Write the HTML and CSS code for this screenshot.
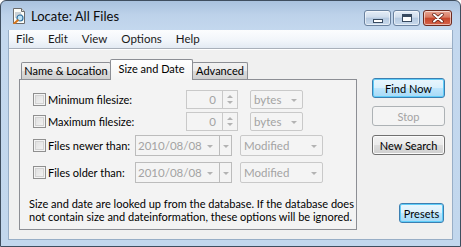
FILE: index.html
```html
<!DOCTYPE html>
<html lang="en">
<head>
    <meta charset="UTF-8">
    <title>Locate: All Files</title>
    <link rel="stylesheet" href="styles.css">
</head>
<body>

<div class="window">
    <div class="titlebar">
        <svg class="app-icon" width="16" height="16" viewBox="0 0 16 16">
            <path d="M2.5 0.5h8l3 3v12h-11z" fill="#fdfdf8" stroke="#6b6b6b"/>
            <path d="M10.5 0.5v3h3" fill="#e4e4dc" stroke="#6b6b6b"/>
            <path d="M4 5h6M4 7h7M4 9h3" stroke="#9aa6b4"/>
            <circle cx="9" cy="10" r="3" fill="#bfe3f6" stroke="#2f6f9f" stroke-width="1.2"/>
            <path d="M6.8 12.2l-3.6 3.4" stroke="#d5761e" stroke-width="2" stroke-linecap="round"/>
        </svg>
        <span class="title">Locate: All Files</span>
        <div class="caption-buttons">
            <span class="cap cap-min"><i></i></span>
            <span class="cap cap-max"><i></i></span>
            <span class="cap cap-close">
                <svg width="12" height="10" viewBox="0 0 12 10">
                    <path d="M2 1.5l8 7M10 1.5l-8 7" stroke="#5a1a10" stroke-width="3.4" stroke-linecap="round"/>
                    <path d="M2 1.5l8 7M10 1.5l-8 7" stroke="#fff" stroke-width="2" stroke-linecap="round"/>
                </svg>
            </span>
        </div>
    </div>

    <div class="client">
        <ul class="menubar">
            <li>File</li>
            <li>Edit</li>
            <li>View</li>
            <li>Options</li>
            <li>Help</li>
        </ul>

        <div class="content">
            <div class="tabs">
                <div class="tab-strip">
                    <span class="tab tab-name">Name &amp; Location</span>
                    <span class="tab tab-size active">Size and Date</span>
                    <span class="tab tab-adv">Advanced</span>
                </div>
                <div class="tab-panel">
                    <div class="row row-size">
                        <label class="check"><span class="box"></span>Minimum filesize:</label>
                        <span class="spin-field">0</span>
                        <span class="spin-btn"><i class="up"></i><i class="down"></i></span>
                        <span class="combo combo-unit">bytes<i class="arrow"></i></span>
                    </div>
                    <div class="row row-size row-second">
                        <label class="check"><span class="box"></span>Maximum filesize:</label>
                        <span class="spin-field">0</span>
                        <span class="spin-btn"><i class="up"></i><i class="down"></i></span>
                        <span class="combo combo-unit">bytes<i class="arrow"></i></span>
                    </div>
                    <div class="row row-date">
                        <label class="check"><span class="box"></span>Files newer than:</label>
                        <span class="combo combo-date">2010/08/08<i class="arrow"></i></span>
                        <span class="date-drop"><i class="arrow"></i></span>
                        <span class="combo combo-kind">Modified<i class="arrow"></i></span>
                    </div>
                    <div class="row row-date row-last">
                        <label class="check"><span class="box"></span>Files older than:</label>
                        <span class="combo combo-date">2010/08/08<i class="arrow"></i></span>
                        <span class="date-drop"><i class="arrow"></i></span>
                        <span class="combo combo-kind">Modified<i class="arrow"></i></span>
                    </div>
                    <p class="note">Size and date are looked up from the database. If the database does<br>not contain size and dateinformation, these options will be ignored.</p>
                </div>
            </div>

            <div class="actions">
                <button class="btn btn-default">Find Now</button>
                <button class="btn btn-disabled">Stop</button>
                <button class="btn btn-new">New Search</button>
                <button class="btn btn-presets">Presets</button>
            </div>
        </div>
    </div>
</div>

</body>
</html>
```

FILE: styles.css
```css
/* Window chrome */
:root {
    --ui-font: "Lato", "Noto Sans", sans-serif;
    --frame-blue: #c2d7ed;
    --panel-bg: #f3f3f3;
    --disabled-text: #a3a3a3;
    --disabled-border: #c9c9c9;
}

* {
    margin: 0;
    padding: 0;
    box-sizing: border-box;
}

body {
    width: 461px;
    height: 247px;
    overflow: hidden;
    font-family: var(--ui-font);
    font-size: 11px;
    color: #000;
    background: #fff;
}

.window {
    width: 461px;
    height: 247px;
    border: 1px solid #3f4e5f;
    border-radius: 6px 6px 0 0;
    background: linear-gradient(180deg, #a9c2de 0px, #bdd2ea 14px, #c4d8ee 30px, var(--frame-blue) 100%);
    display: flex;
    flex-direction: column;
    overflow: hidden;
}

.titlebar {
    height: 29px;
    display: flex;
    align-items: center;
    padding-left: 10px;
    position: relative;
}

.app-icon {
    margin-top: 1px;
}

.title {
    margin-left: 4px;
    font-size: 13px;
    color: #0b0b0b;
    margin-top: 1px;
}

.caption-buttons {
    position: absolute;
    top: 9px;
    right: 8px;
    display: flex;
    gap: 2px;
}

.cap {
    height: 16px;
    width: 27px;
    border: 1px solid #6a819e;
    border-radius: 3px;
    display: flex;
    align-items: center;
    justify-content: center;
    background: linear-gradient(180deg, #e4edf7 0%, #cfdcec 45%, #b4c8e0 50%, #c9daec 100%);
    box-shadow: inset 0 0 0 1px rgba(255, 255, 255, 0.55);
}

.cap-close {
    width: 29px;
    border-color: #6d2a1e;
    background: linear-gradient(180deg, #e9a593 0%, #d87a62 45%, #c6452a 50%, #d6634a 100%);
    margin-left: 1px;
}

.cap-min i {
    width: 10px;
    height: 4px;
    margin-top: 5px;
    border: 1px solid #384a60;
    background: #fff;
}

.cap-max i {
    width: 10px;
    height: 8px;
    border: 1px solid #384a60;
    background: #fff;
    box-shadow: inset 0 2px 0 #384a60;
}

/* Client area */
.client {
    flex: 1;
    margin: 0 7px 6px 7px;
    background: #f0f0f0;
    border: 1px solid #98aec6;
    border-top: none;
    display: flex;
    flex-direction: column;
}

.menubar {
    height: 19px;
    list-style: none;
    display: flex;
    padding-left: 0;
    background: linear-gradient(180deg, #fcfdfe 0%, #f1f5fa 60%, #e3eaf3 100%);
    border-bottom: 1px solid #a9b0ba;
    box-shadow: 0 1px 0 #fff;
}

.menubar li {
    padding: 0 7px;
    font-size: 11.5px;
    line-height: 18px;
    color: #1a1a1a;
}

.content {
    flex: 1;
    display: flex;
    padding: 10px 0 0 10px;
}

/* Tabs */
.tabs {
    width: 338px;
}

.tab-strip {
    height: 20px;
    display: flex;
    align-items: flex-end;
    padding-left: 2px;
}

.tab {
    height: 17px;
    border: 1px solid #8c8e94;
    border-bottom: none;
    border-radius: 2px 2px 0 0;
    background: linear-gradient(180deg, #f2f2f2 0%, #ebebeb 50%, #dcdcdc 51%, #cfcfcf 100%);
    font-size: 11px;
    line-height: 16px;
    text-align: center;
    white-space: nowrap;
}

.tab-name {
    width: 90px;
}

.tab-size {
    width: 83px;
    margin-left: -1px;
}

.tab-adv {
    width: 56px;
    margin-left: -1px;
}

.tab.active {
    height: 21px;
    margin-bottom: -1px;
    position: relative;
    z-index: 1;
    line-height: 18px;
    background: linear-gradient(180deg, #ffffff 0%, var(--panel-bg) 100%);
}

.tab-panel {
    height: 151px;
    border: 1px solid #8c8e94;
    background: var(--panel-bg);
    padding: 10px 0 0 13px;
    overflow: hidden;
}

.row {
    display: flex;
    align-items: center;
    height: 19px;
}

.row-second {
    margin-top: 3px;
}

.row-date {
    height: 21px;
    margin-top: 4px;
}

.row-last {
    margin-top: 6px;
}

.check {
    display: flex;
    align-items: center;
    font-size: 11px;
    white-space: nowrap;
}

.row-size .check {
    width: 153px;
}

.row-date .check {
    width: 102px;
}

.box {
    width: 13px;
    height: 13px;
    margin-right: 2px;
    border: 1px solid #8f8f8f;
    background: linear-gradient(135deg, #dcdcdc 0%, #f6f6f6 100%);
    box-shadow: inset 0 0 0 1px #f4f4f4, inset 0 0 0 2px #d2d2d2;
}

.spin-field {
    width: 37px;
    height: 19px;
    border: 1px solid var(--disabled-border);
    background: #f4f4f4;
    color: var(--disabled-text);
    text-align: right;
    padding-right: 6px;
    line-height: 17px;
    font-size: 11.5px;
}

.spin-btn {
    width: 15px;
    height: 19px;
    border: 1px solid var(--disabled-border);
    border-left: none;
    display: flex;
    flex-direction: column;
    align-items: center;
    justify-content: space-around;
    background: #f4f4f4;
    padding: 2px 0;
}

.spin-btn .up {
    border-left: 3px solid transparent;
    border-right: 3px solid transparent;
    border-bottom: 3px solid #b3b3b3;
}

.spin-btn .down {
    border-left: 3px solid transparent;
    border-right: 3px solid transparent;
    border-top: 3px solid #b3b3b3;
}

.combo {
    position: relative;
    height: 19px;
    border: 1px solid var(--disabled-border);
    border-radius: 2px;
    background: #f4f4f4;
    color: var(--disabled-text);
    line-height: 17px;
    padding-left: 3px;
    font-size: 11.5px;
}

.arrow {
    position: absolute;
    top: 50%;
    right: 5px;
    margin-top: -1px;
    border-left: 3px solid transparent;
    border-right: 3px solid transparent;
    border-top: 3px solid #b3b3b3;
}

.combo-unit {
    width: 53px;
    margin-left: 12px;
}

.combo-date {
    width: 85px;
    height: 21px;
    line-height: 19px;
    border-radius: 0;
    border-color: #bcbcbc;
    padding-left: 2px;
}

.combo-date .arrow {
    right: 6px;
}

.date-drop {
    position: relative;
    width: 12px;
    height: 21px;
    border: 1px solid #bcbcbc;
    border-left: none;
    background: #f4f4f4;
}

.date-drop .arrow {
    right: 2px;
}

.combo-kind {
    width: 83px;
    height: 21px;
    line-height: 19px;
    margin-left: 8px;
}

.note {
    margin-top: 14px;
    margin-left: -4px;
    font-size: 11px;
    line-height: 13px;
    white-space: nowrap;
}

/* Action buttons */
.actions {
    width: 73px;
    margin-left: 15px;
    padding: 19px 0 16px;
    display: flex;
    flex-direction: column;
    align-items: flex-end;
}

.btn {
    width: 73px;
    height: 20px;
    font-family: var(--ui-font);
    font-size: 11px;
    color: #000;
    border: 1px solid #707070;
    border-radius: 3px;
    background: linear-gradient(180deg, #f2f2f2 0%, #ebebeb 50%, #dddddd 51%, #cfcfcf 100%);
    box-shadow: inset 0 0 0 1px #fbfbfb;
}

.btn + .btn {
    margin-top: 8px;
}

.btn-default {
    border-color: #3c7fb1;
    background: linear-gradient(180deg, #eaf6fd 0%, #d9f0fc 50%, #bee6fd 51%, #a7d9f5 100%);
    box-shadow: inset 0 0 0 1px #5fcdf9;
}

.btn-disabled {
    border-color: #adb2b5;
    background: #f4f4f4;
    color: var(--disabled-text);
    box-shadow: none;
}

.actions .btn-new {
    margin-top: 9px;
}

.actions .btn-presets {
    width: 45px;
    margin-top: auto;
    margin-right: 1px;
    border-color: #3c7fb1;
    background: linear-gradient(180deg, #eaf6fd 0%, #d9f0fc 50%, #bee6fd 51%, #a7d9f5 100%);
    box-shadow: inset 0 0 0 1px #5fcdf9;
}
```
